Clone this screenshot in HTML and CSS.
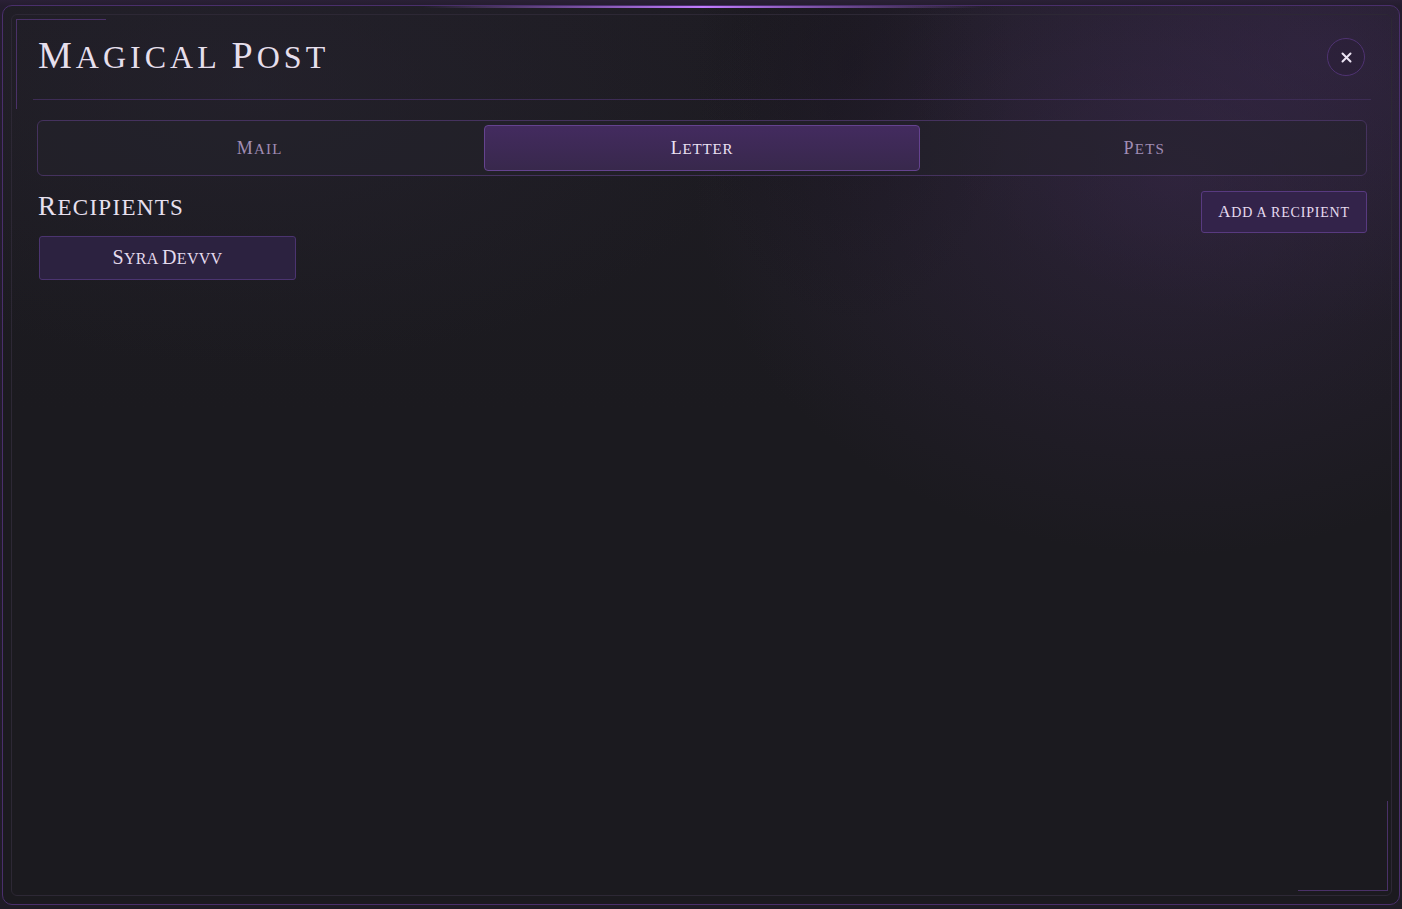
FILE: index.html
```html
<!DOCTYPE html>
<html lang="en">
<head>
<meta charset="utf-8">
<title>Magical Post</title>
<link rel="stylesheet" href="styles.css">
</head>
<body>
<div class="modal">
  <div class="frame"></div>
  <div class="corner corner-tl"></div>
  <div class="corner corner-br"></div>
  <div class="glow"></div>

  <header class="header">
    <h1 class="title"><span class="ini">M</span>agical <span class="ini">P</span>ost</h1>
    <button class="close" aria-label="Close">
      <svg width="11" height="11" viewBox="0 0 11 11"><path d="M1.5 1.5 L9.5 9.5 M9.5 1.5 L1.5 9.5" stroke="#ece4f4" stroke-width="2" stroke-linecap="round"/></svg>
    </button>
  </header>

  <main class="content">
    <nav class="tabs">
      <div class="tab"><span class="label"><span class="ini">M</span>ail</span></div>
      <div class="tab active"><span class="label"><span class="ini">L</span>etter</span></div>
      <div class="tab"><span class="label"><span class="ini">P</span>ets</span></div>
    </nav>

    <div class="rec-row">
      <h2 class="rec-title"><span class="ini">R</span>ecipients</h2>
      <button class="add-btn"><span class="label"><span class="ini">A</span>dd a recipient</span></button>
    </div>

    <div class="rec-list">
      <button class="rec-item"><span class="label"><span class="ini">S</span>yra <span class="ini">D</span>evvv</span></button>
    </div>
  </main>
</div>
</body>
</html>
```

FILE: styles.css
```css
* { box-sizing: border-box; }

html, body {
  margin: 0;
  padding: 0;
}

body {
  width: 1402px;
  height: 909px;
  overflow: hidden;
  background: linear-gradient(180deg, #2a2036 0px, #241d2e 6px, #1f1c26 100%);
  font-family: "Liberation Serif", "DejaVu Serif", serif;
}

.modal {
  position: relative;
  margin: 5px 2px 4px 2px;
  height: 900px;
  border: 1px solid #4a2f6c;
  border-radius: 10px;
  background:
    radial-gradient(ellipse 480px 380px at 1170px 170px, rgba(72, 48, 98, 0.34), rgba(72, 48, 98, 0) 100%),
    radial-gradient(ellipse 420px 280px at 1320px 40px, rgba(66, 44, 92, 0.32), rgba(66, 44, 92, 0) 100%),
    radial-gradient(ellipse 520px 280px at 250px 80px, rgba(40, 37, 50, 0.5), rgba(40, 37, 50, 0) 100%),
    radial-gradient(ellipse 160px 260px at 850px 60px, rgba(20, 18, 24, 0.5), rgba(20, 18, 24, 0) 100%),
    linear-gradient(180deg, #1e1c23 0%, #1b1a1f 45%, #1b1a1f 100%);
  overflow: hidden;
}

.frame {
  position: absolute;
  left: 8px;
  top: 8px;
  right: 7px;
  bottom: 8px;
  border: 1px solid #2d2835;
  border-radius: 6px;
  pointer-events: none;
}

.corner {
  position: absolute;
  width: 90px;
  height: 90px;
  pointer-events: none;
}

.corner-tl {
  left: 13px;
  top: 13px;
  border-top: 1px solid #4a3168;
  border-left: 1px solid #4a3168;
}

.corner-br {
  right: 11px;
  bottom: 13px;
  border-right: 1px solid #4a3168;
  border-bottom: 1px solid #4a3168;
}

.glow {
  position: absolute;
  top: 0;
  left: 420px;
  width: 560px;
  height: 2px;
  background: linear-gradient(90deg, rgba(176, 112, 240, 0) 0%, rgba(176, 112, 240, 0.55) 25%, #c27cff 50%, rgba(176, 112, 240, 0.55) 75%, rgba(176, 112, 240, 0) 100%);
}

.ini { font-size: 1.18em; }

.header {
  position: relative;
  margin: 9px 28px 0 30px;
  padding: 0 5px;
  height: 85px;
  border-bottom: 1px solid #3d2c55;
  display: flex;
  align-items: center;
  justify-content: space-between;
}

.title {
  margin: 0;
  font-weight: normal;
  font-size: 32px;
  line-height: 1;
  letter-spacing: 4px;
  text-transform: uppercase;
  color: #e6dfec;
  padding-bottom: 4px;
}

.title .ini { font-size: 1.19em; }

.close {
  width: 38px;
  height: 38px;
  border-radius: 50%;
  border: 1px solid #4f3372;
  background: rgba(40, 28, 54, 0.3);
  display: flex;
  align-items: center;
  justify-content: center;
  padding: 0;
  margin-right: 1px;
}

.content {
  padding: 20px 32px 0 34px;
}

.tabs {
  display: grid;
  grid-template-columns: 1fr 1fr 1fr;
  gap: 7px;
  padding: 4px;
  height: 56px;
  border: 1px solid #45325e;
  border-radius: 6px;
  background: rgba(36, 34, 44, 0.55);
}

.tab {
  display: flex;
  align-items: center;
  justify-content: center;
  border-radius: 4px;
  font-size: 15px;
  letter-spacing: 1.2px;
  text-transform: uppercase;
  color: #a08db5;
}

.tab .ini { font-size: 1.2em; }

.tab.active {
  border: 1px solid #65438f;
  background: linear-gradient(180deg, #432b5f 0%, #38284c 100%);
  color: #ece2f4;
  letter-spacing: 0.8px;
}

.rec-row {
  margin-top: 15px;
  display: flex;
  justify-content: space-between;
  align-items: flex-start;
}

.rec-title {
  margin: 2px 0 0 1px;
  font-weight: normal;
  font-size: 23px;
  line-height: 1;
  letter-spacing: 1.3px;
  text-transform: uppercase;
  color: #e7e0ef;
}

.add-btn {
  height: 42px;
  width: 166px;
  border: 1px solid #583a80;
  border-radius: 3px;
  background: #33234a;
  color: #e6dbf0;
  font-family: "Liberation Serif", "DejaVu Serif", serif;
  font-size: 14px;
  letter-spacing: 0.8px;
  text-transform: uppercase;
  padding: 0;
  display: flex;
  align-items: center;
  justify-content: center;
}

.add-btn .ini { font-size: 1.21em; }

.rec-list {
  margin-top: 3px;
  padding-left: 2px;
  display: flex;
}

.rec-item {
  width: 257px;
  height: 44px;
  border: 1px solid #4b3470;
  border-radius: 3px;
  background: #2c2240;
  color: #e4daee;
  font-family: "Liberation Serif", "DejaVu Serif", serif;
  font-size: 16px;
  letter-spacing: 0.3px;
  text-transform: uppercase;
  padding: 0 0 2px 0;
  display: flex;
  align-items: center;
  justify-content: center;
}

.rec-item .ini { font-size: 1.25em; }
```
